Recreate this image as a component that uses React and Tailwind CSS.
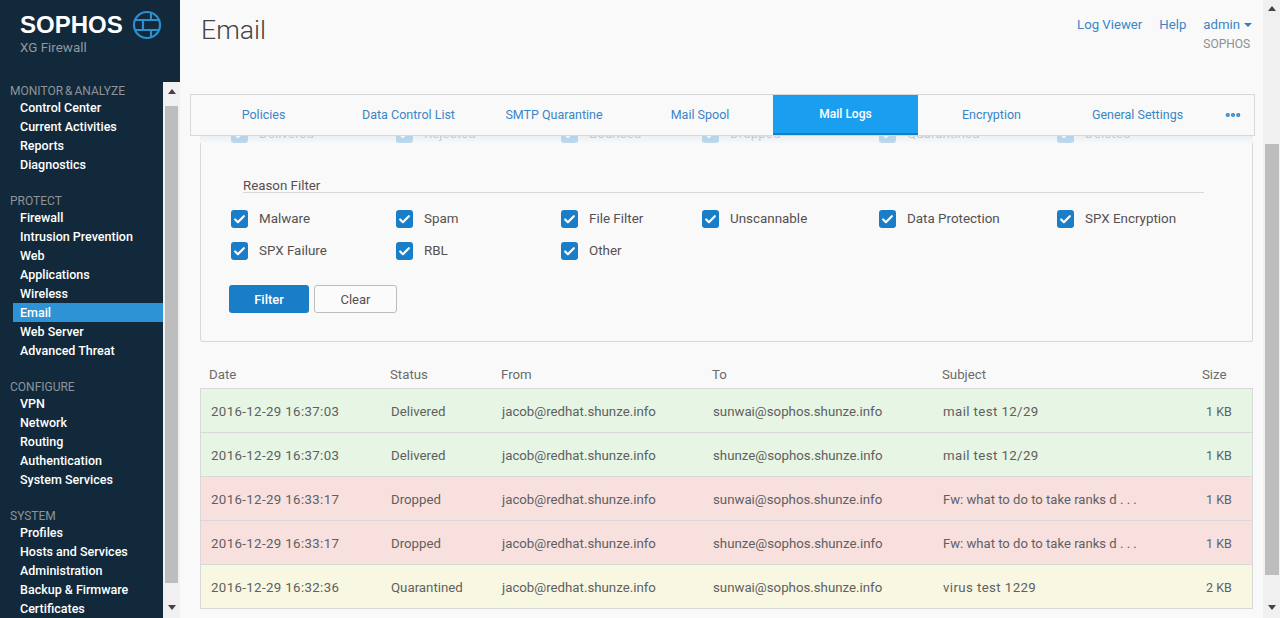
import { Check, Ellipsis } from 'lucide-react';

const navSections = [
  { title: 'MONITOR & ANALYZE', items: ['Control Center', 'Current Activities', 'Reports', 'Diagnostics'] },
  { title: 'PROTECT', items: ['Firewall', 'Intrusion Prevention', 'Web', 'Applications', 'Wireless', 'Email', 'Web Server', 'Advanced Threat'] },
  { title: 'CONFIGURE', items: ['VPN', 'Network', 'Routing', 'Authentication', 'System Services'] },
  { title: 'SYSTEM', items: ['Profiles', 'Hosts and Services', 'Administration', 'Backup & Firmware', 'Certificates'] },
];

const tabs = [
  { label: 'Policies', w: 'w-[145px]' },
  { label: 'Data Control List', w: 'w-[145px]' },
  { label: 'SMTP Quarantine', w: 'w-[146px]' },
  { label: 'Mail Spool', w: 'w-[146px]' },
  { label: 'Mail Logs', w: 'w-[145px]', active: true },
  { label: 'Encryption', w: 'w-[147px]' },
  { label: 'General Settings', w: 'w-[145px]' },
];

const reasonRows = [
  [
    { label: 'Malware', w: 'w-[165px]' },
    { label: 'Spam', w: 'w-[165px]' },
    { label: 'File Filter', w: 'w-[141px]' },
    { label: 'Unscannable', w: 'w-[177px]' },
    { label: 'Data Protection', w: 'w-[178px]' },
    { label: 'SPX Encryption', w: 'w-[140px]' },
  ],
  [
    { label: 'SPX Failure', w: 'w-[165px]' },
    { label: 'RBL', w: 'w-[165px]' },
    { label: 'Other', w: 'w-[141px]' },
  ],
];

const hiddenRow = [
  { label: 'Delivered', w: 'w-[165px]' },
  { label: 'Rejected', w: 'w-[165px]' },
  { label: 'Bounced', w: 'w-[141px]' },
  { label: 'Dropped', w: 'w-[177px]' },
  { label: 'Quarantined', w: 'w-[178px]' },
  { label: 'Deleted', w: 'w-[140px]' },
];

const logs = [
  { date: '2016-12-29 16:37:03', status: 'Delivered', from: 'jacob@redhat.shunze.info', to: 'sunwai@sophos.shunze.info', subject: 'mail test 12/29', wide: true, size: '1 KB', bg: 'bg-[#e6f5e4]' },
  { date: '2016-12-29 16:37:03', status: 'Delivered', from: 'jacob@redhat.shunze.info', to: 'shunze@sophos.shunze.info', subject: 'mail test 12/29', wide: true, size: '1 KB', bg: 'bg-[#e6f5e4]' },
  { date: '2016-12-29 16:33:17', status: 'Dropped', from: 'jacob@redhat.shunze.info', to: 'sunwai@sophos.shunze.info', subject: 'Fw: what to do to take ranks d . . .', size: '1 KB', bg: 'bg-[#f8e0df]' },
  { date: '2016-12-29 16:33:17', status: 'Dropped', from: 'jacob@redhat.shunze.info', to: 'shunze@sophos.shunze.info', subject: 'Fw: what to do to take ranks d . . .', size: '1 KB', bg: 'bg-[#f8e0df]' },
  { date: '2016-12-29 16:32:36', status: 'Quarantined', from: 'jacob@redhat.shunze.info', to: 'sunwai@sophos.shunze.info', subject: 'virus test 1229', wide: true, size: '2 KB', bg: 'bg-[#f7f7e2]' },
];

const Checkbox = () => (
  <span className="flex h-[18px] w-[17px] shrink-0 items-center justify-center rounded-[3px] bg-[#1a7dc8] text-white">
    <Check className="h-[13px] w-[13px]" strokeWidth={4} />
  </span>
);

const ScrollArrow = ({ up }) => (
  <span className={`h-0 w-0 border-x-[4px] border-x-transparent ${up ? 'border-b-[5px] border-b-[#4a4044]' : 'border-t-[5px] border-t-[#4a4044]'}`} />
);

const Sidebar = () => (
  <aside className="flex h-full w-[180px] shrink-0 flex-col bg-[#12293b]">
    {/* Logo */}
    <div className="h-[82px] shrink-0 pl-[20px] pt-[9px]">
      <div className="flex items-center gap-[9px]">
        <span className="font-['Liberation_Sans',sans-serif] text-[24px] font-bold leading-[32px] text-white">SOPHOS</span>
        <svg viewBox="0 0 30 30" className="h-[30px] w-[30px]" fill="none" stroke="#2b8fd0" strokeWidth="2.2">
          <circle cx="15" cy="15" r="13" />
          <path d="M3.5 10h23M3.5 20h23M19 2.5V10M11 10v10M19 20v7.5" />
        </svg>
      </div>
      <div className="-mt-[1px] text-[13.4px] leading-[16px] text-[#8e9aa3]">XG Firewall</div>
    </div>
    <div className="flex min-h-0 flex-1">
      <nav className="w-[163px] overflow-hidden pl-[10px] pt-[2px]">
        {navSections.map((s) => (
          <div key={s.title} className="mb-[20px]">
            <div className="text-[12px] leading-[14px] text-[#8e9499] [word-spacing:-1px]">{s.title}</div>
            {s.items.map((item) => (
              <div
                key={item}
                className={`ml-[3px] h-[19px] pl-[7px] text-[12.5px] font-medium leading-[19px] text-white ${item === 'Email' ? 'bg-[#2e93d4]' : ''}`}
              >
                {item}
              </div>
            ))}
          </div>
        ))}
      </nav>
      {/* Sidebar scrollbar */}
      <div className="flex w-[17px] shrink-0 flex-col items-center bg-[#f0f0f0]">
        <div className="flex h-[24px] items-start justify-center pt-[7px]"><ScrollArrow up /></div>
        <div className="h-[477px] w-[13px] bg-[#bdbdbd]" />
        <div className="flex flex-1 items-end justify-center pb-[8px]"><ScrollArrow /></div>
      </div>
    </div>
  </aside>
);

const FilterItem = ({ label, w }) => (
  <div className={`flex items-center gap-[11px] ${w}`}>
    <Checkbox />
    <span className="text-[13.4px] leading-[18px] text-[#55504f]">{label}</span>
  </div>
);

const App = () => (
  <div className="flex h-screen w-full overflow-hidden bg-[#f9f9f9] font-['Roboto',sans-serif]">
    <Sidebar />
    <main className="flex min-w-0 flex-1 flex-col">
      {/* Header */}
      <header className="flex h-[94px] shrink-0 justify-between pl-[21px] pr-[11px]">
        <h1 className="pt-[13px] text-[26.6px] font-light leading-[34px] text-[#444444]">Email</h1>
        <div className="flex gap-[17px] pt-[16px] text-[13.2px] leading-[18px] text-[#3a85c6]">
          <span>Log Viewer</span>
          <span>Help</span>
          <div>
            <div className="flex items-center gap-[4px]">
              admin
              <span className="h-0 w-0 border-x-[4px] border-t-[4px] border-x-transparent border-t-[#2f7fc4]" />
            </div>
            <div className="mt-[1px] text-[12px] text-[#8f8f8f]">SOPHOS</div>
          </div>
        </div>
      </header>

      {/* Tabs */}
      <div className="ml-[10px] mr-[8px] flex h-[42px] shrink-0 items-stretch border border-[#d8d8d8] bg-[#f9f9f9]">
        {tabs.map((t) => (
          <div
            key={t.label}
            className={`flex items-center justify-center ${t.w} ${t.active ? 'border-b-2 border-[#1180c8] bg-[#1a9ff0] text-[12px] font-medium text-white' : 'text-[12.5px] text-[#3a85c6]'}`}
          >
            {t.label}
          </div>
        ))}
        <div className="flex flex-1 items-center justify-center pl-[2px] text-[#2f7fc4]">
          <Ellipsis className="h-[18px] w-[18px]" strokeWidth={3.5} />
        </div>
      </div>

      {/* Filter panel */}
      <section className="ml-[20px] mr-[10px] h-[206px] shrink-0 rounded-b-[3px] border-x border-b border-[#d8d8d8] bg-[#f9f9f9]">
        {/* Row scrolled under the tab bar */}
        <div className="-mx-[1px] h-[7px] overflow-hidden bg-gradient-to-b from-[#eaf0f5] to-[#f7f8f9]">
          <div className="flex h-[7px] items-end pl-[31px] opacity-25">
            {hiddenRow.map((i) => (
              <FilterItem key={i.label} label={i.label} w={i.w} />
            ))}
          </div>
        </div>
        <div className="ml-[42px] mr-[48px] mt-[36px] h-[14px] border-b border-[#d8d8d8]">
          <span className="block text-[13.3px] leading-[14px] text-[#55504f]">Reason Filter</span>
        </div>
        <div className="ml-[30px] mt-[17px] flex flex-col gap-[14px]">
          {reasonRows.map((row, i) => (
            <div key={i} className="flex">
              {row.map((r) => (
                <FilterItem key={r.label} label={r.label} w={r.w} />
              ))}
            </div>
          ))}
        </div>
        <div className="ml-[28px] mt-[25px] flex gap-[5px]">
          <button className="h-[28px] w-[80px] rounded-[3px] bg-[#1a7dc8] pt-[1px] text-[13px] font-medium text-white">Filter</button>
          <button className="h-[28px] w-[83px] rounded-[3px] border border-[#bdbdbd] bg-[#fbfbfb] pt-[1px] text-[13px] text-[#55504f]">Clear</button>
        </div>
      </section>

      {/* Log table */}
      <div className="ml-[20px] mr-[10px] mt-[21px] flex h-[24px] shrink-0 items-center pl-[9px] text-[13.25px] text-[#6b6b6b]">
        <span className="w-[181px]">Date</span>
        <span className="w-[111px]">Status</span>
        <span className="w-[211px]">From</span>
        <span className="w-[230px]">To</span>
        <span className="w-[260px]">Subject</span>
        <span>Size</span>
      </div>
      <div className="ml-[20px] mr-[10px] mt-[1px] shrink-0 border-t border-[#d8d8d8]">
        {logs.map((l, i) => (
          <div key={i} className={`flex h-[44px] items-center border-x border-b border-[#d8d8d8] pl-[10px] pt-[2px] text-[13.25px] text-[#5f5f5f] ${l.bg}`}>
            <span className="w-[180px] tracking-[0.37px]">{l.date}</span>
            <span className="w-[111px]">{l.status}</span>
            <span className="w-[211px]">{l.from}</span>
            <span className="w-[230px]">{l.to}</span>
            <span className={`w-[263px] ${l.wide ? 'tracking-[0.4px]' : 'text-[13.1px]'}`}>{l.subject}</span>
            <span className="pt-[1px] text-[12.5px]">{l.size}</span>
          </div>
        ))}
      </div>
    </main>

    {/* Page scrollbar */}
    <div className="flex h-full w-[17px] shrink-0 flex-col bg-[#f0f0f0] pl-[2px]">
      <div className="flex h-[17px] w-[14px] shrink-0 items-center justify-center"><ScrollArrow up /></div>
      <div className="mt-[127px] h-[431px] w-[14px] shrink-0 bg-[#bdbdbd]" />
      <div className="flex w-[14px] flex-1 items-end justify-center pb-[8px]"><ScrollArrow /></div>
    </div>
  </div>
);

export default App;
